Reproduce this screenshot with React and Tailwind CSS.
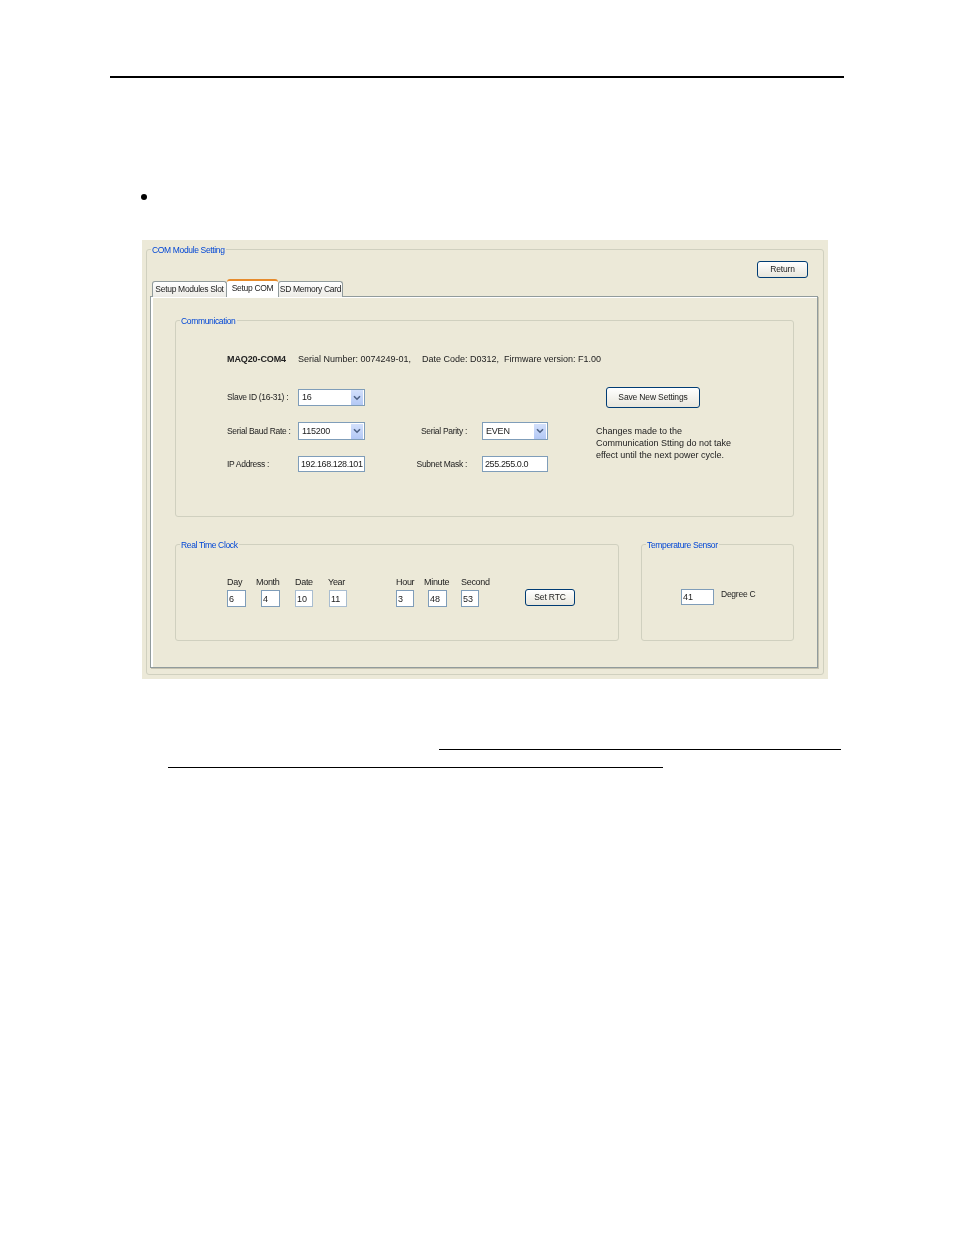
import React from "react";

const TextBox = ({ value, className = "" }) => (
    <input
        readOnly
        value={value}
        className={`border border-[#7f9db9] bg-white text-[9px] text-[#222] outline-none ${className}`}
    />
);

const Combo = ({ value }) => (
    <div className="flex h-full w-full items-center justify-between border border-[#7f9db9] bg-white pl-[3px] pr-[1px] text-[9px] tracking-[-0.2px] text-[#222]">
        <span className="pt-px">{value}</span>
        <span className="flex h-[15px] w-[12px] items-center justify-center bg-linear-to-b from-[#d3e0fb] to-[#b3c8f5]">
            <svg width="8" height="6" viewBox="0 0 8 6" fill="none" stroke="#4d6185" strokeWidth="1.6">
                <path d="M1 1.2 L4 4.2 L7 1.2" />
            </svg>
        </span>
    </div>
);

const XpButton = ({ children, className = "" }) => (
    <button className={`whitespace-nowrap rounded-[3px] border border-[#003c74] bg-linear-to-b from-white to-[#e8e6dc] text-[8.5px] tracking-[-0.15px] text-[#222] ${className}`}>
        {children}
    </button>
);

const Group = ({ title, className = "", children }) => (
    <fieldset className={`rounded-[3px] border border-[#d0d0bf] ${className}`}>
        <legend className="ml-[4px] h-[12px] whitespace-nowrap px-[1px] text-[8.5px] leading-[14px] tracking-[-0.35px] text-[#0046d5]">{title}</legend>
        {children}
    </fieldset>
);

const clockFields = [
    { label: "Day", value: "6", col: "w-[29px]", box: "w-[19px]" },
    { label: "Month", value: "4", col: "w-[39px]", box: "ml-[5px] w-[19px]" },
    { label: "Date", value: "10", col: "w-[33px]", box: "w-[18px] border-[#a9bdd0]" },
    { label: "Year", value: "11", col: "w-[68px]", box: "ml-[1px] w-[18px] border-[#a9bdd0]" },
    { label: "Hour", value: "3", col: "w-[28px]", box: "w-[18px]" },
    { label: "Minute", value: "48", col: "w-[37px]", box: "ml-[4px] w-[19px]" },
    { label: "Second", value: "53", col: "w-[64px]", box: "w-[18px]" },
];

const App = () => {
    return (
        <div className="min-h-[1235px] bg-white pt-[76px] font-['Liberation_Sans',sans-serif]">
            <div className="ml-[110px] h-[2px] w-[734px] bg-black" />
            <div className="ml-[141px] mt-[116px] h-[6px] w-[6px] rounded-full bg-black" />

            <div className="ml-[142px] mt-[40px] h-[439px] w-[686px] bg-[#ece9d8] px-[4px] pt-[3px] text-[9px] text-[#222] blur-[0.3px]">
                <Group title="COM Module Setting" className="h-[432px] w-[678px]">
                    <div className="mt-[6px] flex justify-end pr-[15px]">
                        <XpButton className="h-[17px] w-[51px]">Return</XpButton>
                    </div>

                    <div className="relative z-10 mb-[-1px] ml-[5px] mt-[1px] flex h-[18px] items-end whitespace-nowrap text-[8.5px] tracking-[-0.3px]">
                        <div className="flex h-[16px] w-[75px] items-center justify-center rounded-t-[3px] border border-b-0 border-[#919b9c] bg-linear-to-b from-white to-[#ecebe5]">
                            Setup Modules Slot
                        </div>
                        <div className="flex h-[18px] w-[51px] items-center justify-center rounded-t-[3px] border-t-2 border-[#e68b2c] bg-white pb-[2px]">
                            Setup COM
                        </div>
                        <div className="flex h-[16px] w-[65px] items-center justify-center rounded-t-[3px] border border-b-0 border-[#919b9c] bg-linear-to-b from-white to-[#ecebe5]">
                            SD Memory Card
                        </div>
                    </div>

                    <div className="ml-[3px] h-[372px] w-[668px] border border-[#919b9c] pl-[24px] pt-[17px] shadow-[inset_2px_0_0_#fff,inset_0_1px_0_#fff,1px_1px_0_#c5c2b0]">
                        <Group title="Communication" className="h-[203px] w-[619px]">
                            <div className="pl-[51px] pt-[27px]">
                                <div className="flex h-[12px] items-center whitespace-nowrap leading-[12px]">
                                    <span className="w-[71px] font-bold tracking-[-0.1px]">MAQ20-COM4</span>
                                    <span className="w-[124px]">Serial Number: 0074249-01,</span>
                                    <span className="w-[82px]">Date Code: D0312,</span>
                                    <span>Firmware version: F1.00</span>
                                </div>

                                <div className="mt-[24px] grid grid-cols-[71px_67px_117px_66px_48px_1fr] grid-rows-[17px_18px_16px] items-center gap-y-[16px] whitespace-nowrap text-[8.5px] tracking-[-0.3px]">
                                    <span>Slave ID (16-31) :</span>
                                    <Combo value="16" />
                                    <XpButton className="col-start-6 ml-[10px] h-[21px] w-[94px]">Save New Settings</XpButton>

                                    <span className="col-start-1 row-start-2 pt-px">Serial Baud Rate :</span>
                                    <div className="col-start-2 row-start-2 h-full">
                                        <Combo value="115200" />
                                    </div>
                                    <span className="col-start-3 row-start-2 pr-[15px] pt-px text-right">Serial Parity :</span>
                                    <div className="col-start-4 row-start-2 h-full">
                                        <Combo value="EVEN" />
                                    </div>
                                    <p className="col-start-6 row-span-2 row-start-2 self-start pt-[3px] text-[9px] leading-[12px] tracking-normal">
                                        Changes made to the
                                        <br />
                                        Communication Stting do not take
                                        <br />
                                        effect until the next power cycle.
                                    </p>

                                    <span className="col-start-1 row-start-3">IP Address :</span>
                                    <TextBox value="192.168.128.101" className="col-start-2 row-start-3 h-[16px] w-[67px] pl-[2px] tracking-[-0.4px]" />
                                    <span className="col-start-3 row-start-3 pr-[15px] text-right">Subnet Mask :</span>
                                    <TextBox value="255.255.0.0" className="col-start-4 row-start-3 h-[16px] w-[66px] pl-[2px] tracking-[-0.4px]" />
                                </div>
                            </div>
                        </Group>

                        <div className="mt-[21px] flex w-[619px] gap-[22px]">
                            <Group title="Real Time Clock" className="h-[103px] w-[444px]">
                                <div className="flex items-start whitespace-nowrap pl-[51px] pt-[26px]">
                                    {clockFields.map((f) => (
                                        <div key={f.label} className={`flex flex-col ${f.col}`}>
                                            <span className="h-[12px] leading-[12px] tracking-[-0.3px]">{f.label}</span>
                                            <TextBox value={f.value} className={`mt-[2px] h-[17px] pl-[1px] ${f.box}`} />
                                        </div>
                                    ))}
                                    <XpButton className="mt-[13px] h-[17px] w-[50px]">Set RTC</XpButton>
                                </div>
                            </Group>

                            <Group title="Temperature Sensor" className="h-[103px] w-[153px]">
                                <div className="flex items-start whitespace-nowrap pl-[39px] pt-[39px]">
                                    <TextBox value="41" className="h-[16px] w-[33px] pl-[1px]" />
                                    <span className="ml-[7px] mt-[-1px] text-[8.5px] leading-[12px] tracking-[-0.25px]">Degree C</span>
                                </div>
                            </Group>
                        </div>
                    </div>
                </Group>
            </div>

            <div className="ml-[168px] mt-[70px]">
                <div className="ml-[271px] h-px w-[402px] bg-black" />
                <div className="mt-[17px] h-px w-[495px] bg-black" />
            </div>
        </div>
    );
};

export default App;
